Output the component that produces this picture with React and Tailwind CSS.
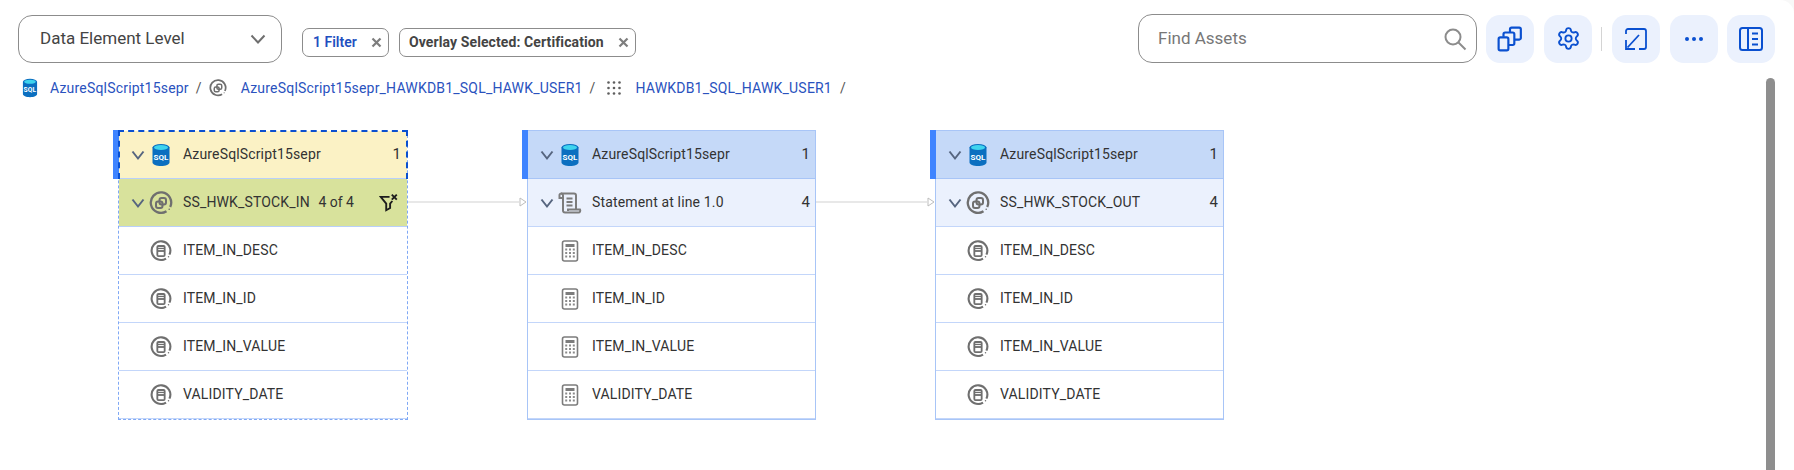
import React from "react";
import { Settings } from "lucide-react";

function SqlIcon({ size = 24 }) {
  return (
    <svg width={size} height={size} viewBox="0 0 24 24" className="shrink-0">
      <path d="M3.5 4.5v15c0 1.9 3.8 3.5 8.5 3.5s8.5-1.6 8.5-3.5v-15z" fill="#0b6fc0" />
      <ellipse cx="12" cy="4.5" rx="8.5" ry="3.5" fill="#0b6fc0" />
      <ellipse cx="12" cy="4.5" rx="7" ry="2.4" fill="#3fd4ee" />
      <text x="12" y="16.5" textAnchor="middle" fontSize="8" fontWeight="700" fill="#fff" fontFamily="Roboto, sans-serif">SQL</text>
    </svg>
  );
}

function Ring({ size = 24, children }) {
  return (
    <svg width={size} height={size} viewBox="0 0 24 24" fill="none" stroke="#6f6f6f" className="shrink-0">
      <path d="M17.5 20.2A10.2 10.2 0 1 1 21.2 16" strokeWidth="2.3" />
      <circle cx="20.2" cy="18.3" r=".8" fill="#6f6f6f" stroke="none" />
      <circle cx="13.8" cy="21.8" r=".8" fill="#6f6f6f" stroke="none" />
      {children}
    </svg>
  );
}

function SetIcon({ size = 24 }) {
  return (
    <Ring size={size}>
      <rect x="7" y="10.5" width="6.5" height="6.5" rx="2" strokeWidth="2" />
      <rect x="10.5" y="7" width="6.5" height="6.5" rx="2" strokeWidth="2" />
    </Ring>
  );
}

function FieldIcon() {
  return (
    <Ring size={22}>
      <rect x="8" y="6.5" width="8" height="11" rx="1.2" strokeWidth="2" />
      <path d="M8 12h8" strokeWidth="2" />
      <path d="M8 9.2h8" strokeWidth="1.4" />
    </Ring>
  );
}

function CalcIcon() {
  return (
    <svg width="22" height="24" viewBox="0 0 22 24" fill="none" className="shrink-0">
      <rect x="3.5" y="2" width="15" height="20" rx="2" stroke="#7c7c7c" strokeWidth="1.6" />
      <rect x="6.5" y="5" width="9" height="3" fill="#7c7c7c" />
      {[10.5, 14, 17.5].map((y) =>
        [7.2, 11, 14.8].map((x) => <rect key={`${x}-${y}`} x={x - 1} y={y - 1} width="2" height="2" fill="#8a8a8a" />)
      )}
    </svg>
  );
}

function ScrollIcon() {
  return (
    <svg width="24" height="24" viewBox="0 0 24 24" fill="none" stroke="#7c7c7c" strokeWidth="2" className="shrink-0">
      <path d="M3 2.5h13a2 2 0 0 1 2 2V19" />
      <path d="M3 2.5a2 2 0 0 1 2 2.2V20a2 2 0 0 0 2 1.6h13.5a2 2 0 0 0 1.5-3h-12v1.4" />
      <path d="M3 2.5a1.8 1.8 0 0 0-1.5 2.2V7H5" />
      <path d="M8.5 7.5h6M8.5 11h6M8.5 14.5h6" />
    </svg>
  );
}

function FilterX() {
  return (
    <svg width="20" height="20" viewBox="0 0 18 18" fill="none" stroke="#1d1d1d" strokeWidth="1.7" className="shrink-0">
      <path d="M9.5 3.5H1.5L6.5 9.5V15.5L10 13.5V9.5L12 7.2" />
      <path d="M11.5 1.5l4.5 4.5M16 1.5L11.5 6" />
    </svg>
  );
}

function Chevron() {
  return (
    <svg width="18" height="18" viewBox="0 0 18 18" fill="none" stroke="#56657f" strokeWidth="2" className="shrink-0">
      <path d="M3.5 5.5L9 12.5l5.5-7" />
    </svg>
  );
}

function GridDots() {
  const pos = [2.5, 8, 13.5];
  return (
    <svg width="16" height="16" viewBox="0 0 16 16" className="shrink-0">
      {pos.map((y) => pos.map((x) => <circle key={`${x}-${y}`} cx={x} cy={y} r="1.3" fill="#5f5f5f" />))}
    </svg>
  );
}

function ChipX() {
  return (
    <svg width="11" height="11" viewBox="0 0 11 11" fill="none" stroke="#7d7d7d" strokeWidth="2.2" className="shrink-0">
      <path d="M1.5 1.5l8 8M9.5 1.5l-8 8" />
    </svg>
  );
}

function IconButton({ children }) {
  return (
    <button className="w-[48px] h-[48px] rounded-[14px] bg-[#ebf1fd] flex items-center justify-center shrink-0">
      {children}
    </button>
  );
}

function Row({ variant = "plain", name, icon, right, tab, chevron }) {
  const styles = {
    yellow: "bg-[#fbf2c5] border-b border-[#b9d0fa]",
    green: "bg-[#d8e29c] border-b border-[#b9d0fa]",
    header: "bg-[#c5d9f8] border-b border-[#a8c5f7]",
    sub: "bg-[#ebf1fd] border-b border-[#c3d6fa]",
    plain: "bg-white border-b border-[#c3d6fa]",
  };
  return (
    <div className={`relative h-[48px] flex items-center pl-[10px] pr-[4px] text-[14px] text-[#333] ${styles[variant]}`}>
      {tab && <div className="absolute left-[-6px] top-[-1px] bottom-[-1px] w-[6px] bg-[#3f84ff]" />}
      {chevron ? <Chevron /> : <div className="w-[18px] shrink-0" />}
      <div className="w-[28px] flex justify-center shrink-0">{icon}</div>
      <span className="ml-[8px] tracking-[0.15px] whitespace-nowrap">{name}</span>
      {right && <div className="ml-auto flex items-center">{right}</div>}
    </div>
  );
}

function Node({ rows, selected }) {
  return (
    <div className={`relative shrink-0 ${selected ? "w-[290px] pt-px border-x border-b border-dashed border-[#7fa8f5]" : "w-[289px] border border-[#a8c5f7]"}`}>
      {selected && <div className="absolute left-[-1px] right-[-1px] top-0 h-[49px] border-2 border-b-0 border-dashed border-[#0a50d0] z-10 pointer-events-none" />}
      {rows.map((r) => (
        <Row key={r.name} {...r} />
      ))}
    </div>
  );
}

function Connector() {
  return (
    <div className="w-[119px] shrink-0 h-[96px] flex items-end">
      <div className="w-full h-[48px] flex items-center">
        <div className="flex-1 h-[2px] bg-[#e8e8e8]" />
        <svg width="8" height="10" viewBox="0 0 8 10" fill="#fff" stroke="#bdbdbd" className="shrink-0">
          <path d="M1 1l6 4-6 4z" />
        </svg>
      </div>
    </div>
  );
}

const fields = ["ITEM_IN_DESC", "ITEM_IN_ID", "ITEM_IN_VALUE", "VALIDITY_DATE"];
const num = (n) => <span className="text-[15px] pr-[1px]">{n}</span>;

const node1 = [
  {
    variant: "yellow",
    name: "AzureSqlScript15sepr",
    icon: <SqlIcon />,
    chevron: true,
    tab: true,
    right: <span className="text-[15px] pr-[2px]">1</span>,
  },
  {
    variant: "green",
    name: "SS_HWK_STOCK_IN",
    icon: <SetIcon />,
    chevron: true,
    right: (
      <>
        <span className="text-[14px] mr-[25px]">4 of 4</span>
        <FilterX />
        <span className="w-[4px]" />
      </>
    ),
  },
  ...fields.map((name) => ({ name, icon: <FieldIcon /> })),
];
const node2 = [
  { variant: "header", name: "AzureSqlScript15sepr", icon: <SqlIcon />, chevron: true, tab: true, right: num(1) },
  { variant: "sub", name: "Statement at line 1.0", icon: <ScrollIcon />, chevron: true, right: num(4) },
  ...fields.map((name) => ({ name, icon: <CalcIcon /> })),
];
const node3 = [
  { variant: "header", name: "AzureSqlScript15sepr", icon: <SqlIcon />, chevron: true, tab: true, right: num(1) },
  { variant: "sub", name: "SS_HWK_STOCK_OUT", icon: <SetIcon />, chevron: true, right: num(4) },
  ...fields.map((name) => ({ name, icon: <FieldIcon /> })),
];

const Blue = "#0a50d0";

export default function App() {
  return (
    <div className="bg-[#f8f8f8]">
      <div className="relative w-full h-[470px] overflow-hidden bg-white rounded-tr-[14px] flex flex-col font-['Roboto',sans-serif]">
        <div className="flex items-center pl-[18px] pr-[19px] pt-[14px]">
          <div className="w-[264px] h-[48px] rounded-[14px] border border-[#8c8c8c] flex items-center pl-[21px] pr-[14px] text-[17px] text-[#444] shrink-0">
            <span>Data Element Level</span>
            <svg width="18" height="18" viewBox="0 0 18 18" fill="none" stroke="#6f6f6f" strokeWidth="2" className="ml-auto">
              <path d="M2.5 5.5L9 12.5l6.5-7" />
            </svg>
          </div>
          <div className="ml-[20px] mt-[7px] h-[29px] w-[87px] rounded-[7px] border border-[#8c8c8c] flex items-center justify-between pl-[10px] pr-[6px] text-[14px] font-semibold text-[#1f4fc0]">
            <span>1 Filter</span>
            <ChipX />
          </div>
          <div className="ml-[10px] mt-[7px] h-[29px] w-[237px] rounded-[7px] border border-[#8c8c8c] flex items-center justify-between pl-[9px] pr-[6px] text-[14px] font-bold tracking-[0.1px] text-[#444]">
            <span>Overlay Selected: Certification</span>
            <ChipX />
          </div>

          <div className="ml-auto w-[339px] h-[49px] rounded-[14px] border border-[#8c8c8c] flex items-center pl-[19px] pr-[9px] text-[17px] text-[#777] shrink-0">
            <span>Find Assets</span>
            <svg width="24" height="24" viewBox="0 0 24 24" fill="none" stroke="#8c8c8c" strokeWidth="2" className="ml-auto">
              <circle cx="10" cy="10" r="7.5" />
              <path d="M15.5 15.5L22.5 22.5" />
            </svg>
          </div>
          <div className="ml-[9px] flex items-center shrink-0">
            <IconButton>
              <svg width="26" height="26" viewBox="0 0 24 24" fill="none" stroke={Blue} strokeWidth="2">
                <rect x="1.5" y="10.5" width="9" height="12" rx="1.5" />
                <path d="M6 10V7.5A1.5 1.5 0 0 1 7.5 6h7A1.5 1.5 0 0 1 16 7.5V16a1.5 1.5 0 0 1-1.5 1.5H11" />
                <path d="M12 6V3a1.5 1.5 0 0 1 1.5-1.5h7A1.5 1.5 0 0 1 22 3v8a1.5 1.5 0 0 1-1.5 1.5H16" />
              </svg>
            </IconButton>
            <div className="ml-[10px]">
              <IconButton>
                <Settings size={25} color={Blue} strokeWidth={1.8} />
              </IconButton>
            </div>
            <div className="w-px h-[24px] bg-[#d4d4d4] ml-[9px] mr-[10px]" />
            <IconButton>
              <svg width="24" height="24" viewBox="0 0 24 24" fill="none" stroke={Blue} strokeWidth="1.8">
                <path d="M2 7V4a2 2 0 0 1 2-2h16a2 2 0 0 1 2 2v16a2 2 0 0 1-2 2h-5" />
                <path d="M15 8L3.5 20.5" />
                <path d="M2 13v9h9" />
              </svg>
            </IconButton>
            <div className="ml-[10px]">
              <IconButton>
                <svg width="20" height="6" viewBox="0 0 20 6" fill={Blue}>
                  <circle cx="3" cy="3" r="2" />
                  <circle cx="10" cy="3" r="2" />
                  <circle cx="17" cy="3" r="2" />
                </svg>
              </IconButton>
            </div>
            <div className="ml-[9px]">
              <IconButton>
                <svg width="26" height="26" viewBox="0 0 26 26" fill="none" stroke={Blue} strokeWidth="2">
                  <rect x="2" y="2" width="22" height="22" rx="2.5" />
                  <path d="M10 2v22M14 7.5h6M14 13h6M14 18.5h6" />
                </svg>
              </IconButton>
            </div>
          </div>
        </div>

        <div className="flex items-center h-[24px] mt-[13px] pl-[20px] text-[14px] text-[#2a52be] tracking-[0.2px] whitespace-nowrap">
          <SqlIcon size={20} />
          <span className="ml-[10px]">AzureSqlScript15sepr</span>
          <span className="ml-[7px] text-[#555]">/</span>
          <div className="ml-[7px]"><SetIcon size={18} /></div>
          <span className="ml-[14px]">AzureSqlScript15sepr_HAWKDB1_SQL_HAWK_USER1</span>
          <span className="ml-[7px] text-[#555]">/</span>
          <div className="ml-[10px]"><GridDots /></div>
          <span className="ml-[14px]">HAWKDB1_SQL_HAWK_USER1</span>
          <span className="ml-[8px] text-[#555]">/</span>
        </div>

        <div className="flex items-start pl-[118px] mt-[30px]">
          <Node rows={node1} selected />
          <Connector />
          <Node rows={node2} />
          <Connector />
          <Node rows={node3} />
        </div>

        <div className="absolute right-[19px] top-[78px] bottom-0 w-[9px] rounded-t-full bg-[#8e8e8e]" />
      </div>
    </div>
  );
}
